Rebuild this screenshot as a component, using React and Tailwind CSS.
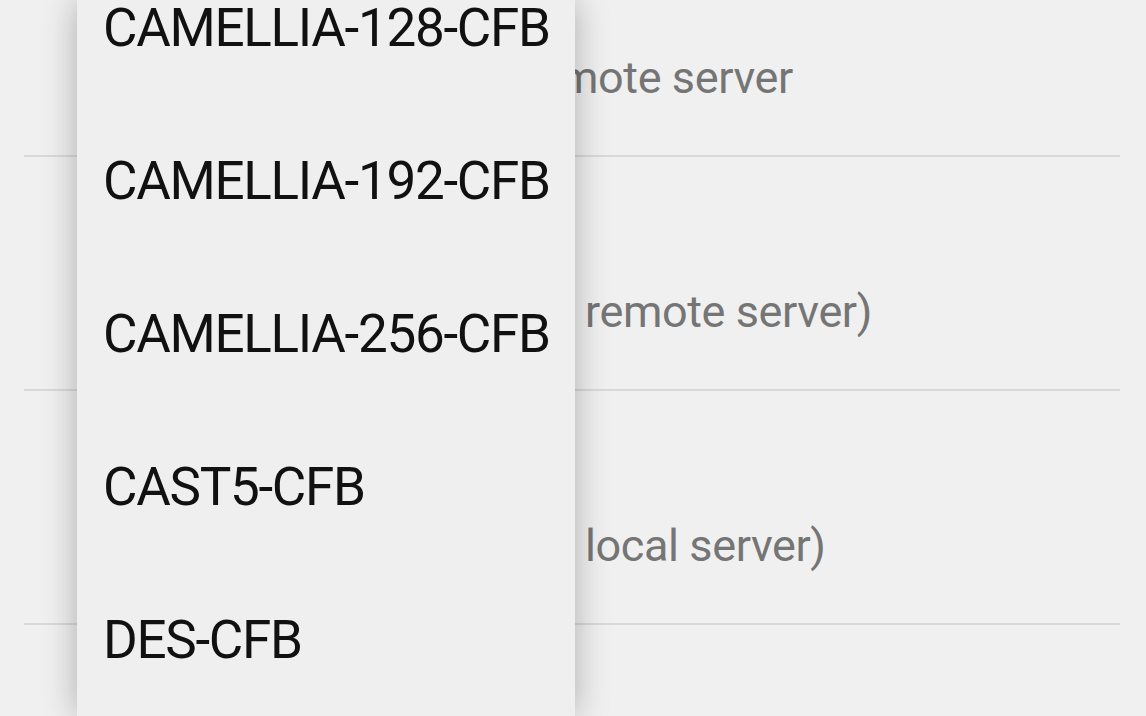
import React from "react";

const rows = [
  { title: "Remote Port", hidden: "Port number of the re", shown: "mote server", gap: "w-[456px]" },
  { title: "Password", hidden: "Password (of the", shown: "remote server)", gap: "w-[482px]" },
  { title: "Local Port", hidden: "Port number (of the", shown: "local server)", gap: "w-[482px]" },
  { title: "Encrypt Method", hidden: "", shown: "", gap: "w-[482px]" },
];

const methods = [
  "CAMELLIA-128-CFB",
  "CAMELLIA-192-CFB",
  "CAMELLIA-256-CFB",
  "CAST5-CFB",
  "DES-CFB",
  "IDEA-CFB",
];

const App = () => {
  return (
    <div className="relative h-screen overflow-hidden bg-[#f0f0f0] font-['Roboto',sans-serif]">
      {/* settings list behind the popup */}
      <div className="-mt-[77px] flex flex-col">
        {rows.map((row, i) => (
          <div
            key={i}
            className="ml-[24px] mr-[26px] flex h-[234px] flex-col justify-end pb-[51px] pl-[79px] border-b-2 border-[#d9d9d9]"
          >
            <div className="text-[53px] leading-[64px] text-[#111] whitespace-nowrap">
              {row.title}
            </div>
            <div className="flex h-[52px] items-center text-[45px] leading-[52px] tracking-[-0.4px] text-[#757575] whitespace-nowrap">
              <span className={`inline-block overflow-hidden ${row.gap}`}>
                {row.hidden}
              </span>
              <span>{row.shown}</span>
            </div>
          </div>
        ))}
      </div>

      {/* dropdown popup */}
      <div className="absolute top-0 bottom-0 left-[77px] w-[498px] overflow-hidden bg-[#efefef] shadow-[0_0_32px_rgba(0,0,0,0.28)]">
        <div className="-mt-[48px] flex flex-col">
          {methods.map((m) => (
            <div
              key={m}
              className="flex h-[153px] items-center pl-[26px] text-[53px] tracking-[-1.3px] text-[#111] whitespace-nowrap"
            >
              {m}
            </div>
          ))}
        </div>
      </div>
    </div>
  );
};

export default App;
